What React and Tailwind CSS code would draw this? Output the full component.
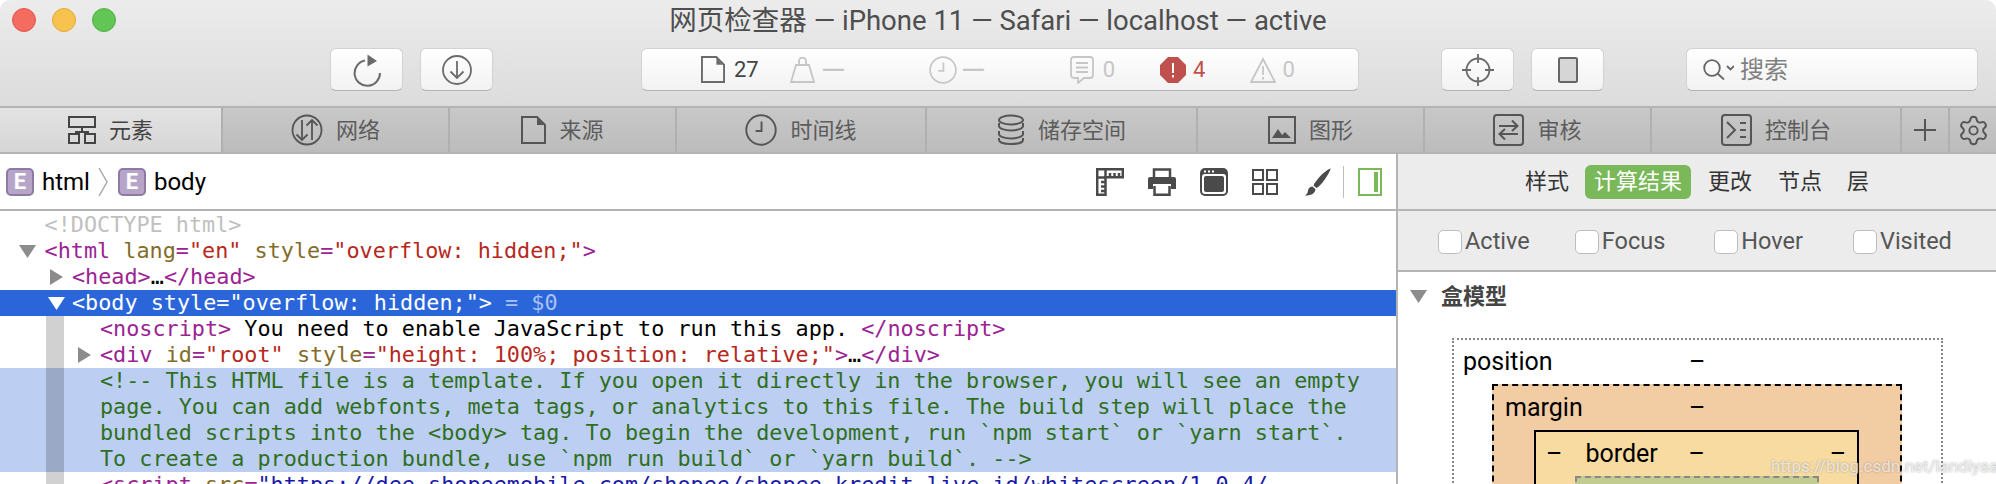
import React from 'react';
import { Settings } from 'lucide-react';

const Tri = ({ dir = 'down', color = '#8c8c8c', className = '' }) => (
  <svg width="17" height="16" viewBox="0 0 17 16" className={'shrink-0 ' + className}>
    {dir === 'down'
      ? <polygon points="0,2 17,2 8.5,15" fill={color} />
      : <polygon points="2,0 15,8 2,16" fill={color} />}
  </svg>
);

// syntax colours
const T = ({ children }) => <span className="text-[#9b2393]">{children}</span>;
const A = ({ children }) => <span className="text-[#836c28]">{children}</span>;
const V = ({ children }) => <span className="text-[#b7281c]">{children}</span>;
const Dots = () => <span className="text-black">…</span>;

const Row = ({ className = '', tri, children }) => (
  <div className={'h-[26px] leading-[26px] flex items-center whitespace-pre ' + className}>
    {tri}
    <span>{children}</span>
  </div>
);

const ToolButton = ({ className = '', children }) => (
  <div className={'h-[43px] bg-gradient-to-b from-white to-[#f2f2f2] rounded-[6px] border border-[#d2d2d2] border-b-[#b4b4b4] flex items-center justify-center ' + className}>
    {children}
  </div>
);

const Dash = () => (
  <span className="ml-[6px] w-[23px] text-center text-[32px] leading-none text-[#c6c6c6]">—</span>
);

const ElementsIcon = () => (
  <svg width="28" height="28" viewBox="0 0 28 28" fill="none" stroke="#444" strokeWidth="2">
    <rect x="1" y="1" width="26" height="10" />
    <path d="M14 11v5M7 16h14" />
    <rect x="1" y="18" width="10" height="9" />
    <rect x="17" y="18" width="10" height="9" />
  </svg>
);
const NetworkIcon = () => (
  <svg width="32" height="32" viewBox="0 0 32 32" fill="none" stroke="#555" strokeWidth="1.8">
    <circle cx="16" cy="16" r="14.5" />
    <path d="M11 6v20M5.500 20.500l5.500 5.500 5.500-5.500M21 26V6M15.500 11.500l5.500-5.500 5.500 5.500" />
  </svg>
);
const DocIcon = ({ color = '#555', w = 25, h = 28 }) => (
  <svg width={w} height={h} viewBox="0 0 25 28" fill="none" stroke={color} strokeWidth="2">
    <path d="M1 1h15l8 8v18H1z" />
    <path d="M16 2v7h7z" fill={color} stroke="none" />
  </svg>
);
const ClockIcon = ({ color = '#555', size = 30 }) => (
  <svg width={size} height={size} viewBox="0 0 30 30" fill="none" stroke={color} strokeWidth="1.8">
    <circle cx="15" cy="15" r="13.800" />
    <path d="M15.500 7v9H10" />
  </svg>
);
const StorageIcon = () => (
  <svg width="28" height="32" viewBox="0 0 28 32" fill="none" stroke="#555" strokeWidth="2">
    <ellipse cx="14" cy="6" rx="12" ry="4.500" />
    <path d="M2 9v3c0 2.500 5.500 4.500 12 4.500s12-2 12-4.500V9" />
    <path d="M2 17v3c0 2.500 5.500 4.500 12 4.500s12-2 12-4.500v-3" />
    <path d="M2 24v2c0 2.500 5.500 4 12 4s12-1.500 12-4v-2" />
  </svg>
);
const ImageIcon = () => (
  <svg width="28" height="28" viewBox="0 0 28 28" fill="none">
    <rect x="1" y="1" width="26" height="26" stroke="#555" strokeWidth="2" />
    <path d="M4 22l6-9 4 6 3-3 6 6z" fill="#555" />
  </svg>
);
const AuditIcon = () => (
  <svg width="31" height="32" viewBox="0 0 31 32" fill="none" stroke="#555" strokeWidth="2">
    <rect x="1" y="1" width="29" height="30" rx="3" />
    <path d="M6 12h18M19 6.500l5.500 5.500-5.500 5" />
    <path d="M25 20H7M12 15l-5.500 5 5.500 5.500" />
  </svg>
);
const ConsoleIcon = () => (
  <svg width="31" height="32" viewBox="0 0 31 32" fill="none" stroke="#555" strokeWidth="2">
    <rect x="1" y="1" width="29" height="30" rx="3" />
    <path d="M6 8l8 8-8 8M19 9h6M19 16h6M19 23h6" />
  </svg>
);
const RulerIcon = () => (
  <svg width="28" height="28" viewBox="0 0 28 28" fill="none" stroke="#4a4a4a" strokeWidth="2.500">
    <path d="M1.200 1.200h25.600v8H9.500v17.600H1.200z" />
    <path d="M9.500 1.500v8M14 5v4M18.500 5v4M23 5v4M1.500 9.500h8M5 14h4.500M5 18.500h4.500M5 23h4.500" />
  </svg>
);
const PrinterIcon = () => (
  <svg width="28" height="28" viewBox="0 0 28 28" fill="none">
    <path d="M6 9V1.500h16V9" stroke="#4a4a4a" strokeWidth="2.500" />
    <path d="M2 9h24a2 2 0 0 1 2 2v10h-5v-5H5v5H0V11a2 2 0 0 1 2-2z" fill="#4a4a4a" />
    <path d="M6.500 18v8.700h15V18" stroke="#4a4a4a" strokeWidth="2.500" />
  </svg>
);
const WindowIcon = () => (
  <svg width="28" height="28" viewBox="0 0 28 28">
    <rect x="0" y="0" width="28" height="28" rx="5" fill="#4a4a4a" />
    <rect x="2" y="6" width="24" height="20" rx="3" fill="#fff" />
    <rect x="4" y="8" width="20" height="16" rx="2" fill="#4a4a4a" />
    <rect x="4" y="2.500" width="2" height="2" fill="#fff" />
    <rect x="8" y="2.500" width="2" height="2" fill="#fff" />
    <rect x="12" y="2.500" width="2" height="2" fill="#fff" />
  </svg>
);
const GridIcon = () => (
  <svg width="26" height="26" viewBox="0 0 26 26" fill="none" stroke="#4a4a4a" strokeWidth="2">
    <rect x="1" y="1" width="10" height="10" />
    <rect x="15" y="1" width="10" height="10" />
    <rect x="1" y="15" width="10" height="10" />
    <rect x="15" y="15" width="10" height="10" />
  </svg>
);
const BrushIcon = () => (
  <svg width="26" height="28" viewBox="0 0 26 28" fill="#4a4a4a">
    <path d="M25.500 0.500C26 1 22 9 17.500 14.500c-2 2.500-4 4.500-6 5.500L8.500 17.500c1-2.500 3-5 5.500-8C18.500 4.500 25 0 25.500 0.500z" />
    <path d="M7.500 18.500l3 2.700c-.5 3.500-3 6.300-10.500 6.300 2.500-1.500 2.500-3 3-5 .5-2.500 2.500-4 4.500-4z" />
  </svg>
);
const PanelIcon = () => (
  <svg width="24" height="28" viewBox="0 0 24 28" fill="none">
    <rect x="1" y="1" width="22" height="26" stroke="#7ab85a" strokeWidth="2" />
    <rect x="16" y="4" width="4" height="20" fill="#7ab85a" />
  </svg>
);
const ElementBadge = () => (
  <span className="w-[28px] h-[28px] rounded-[5px] bg-[#b7a5c9] border-2 border-[#8f7aa6] flex items-center justify-center text-white text-[22px] leading-none font-bold">E</span>
);

const Tab = ({ className = '', icon, label, active }) => (
  <div className={'h-full shrink-0 flex items-center justify-center gap-[13px] border-r-2 border-[#b0b0b0] text-[22px] ' + (active ? 'text-[#444] bg-gradient-to-b from-[#e3e3e3] to-[#d6d6d6] ' : 'text-[#5c5c5c] ') + className}>
    {icon}
    {label && <span>{label}</span>}
  </div>
);

const Pseudo = ({ label, className = '' }) => (
  <div className={'flex items-center gap-[3px] ' + className}>
    <span className="w-[24px] h-[24px] rounded-[5px] bg-white border border-[#bdbdbd]" />
    <span>{label}</span>
  </div>
);

export default function App() {
  return (
    <div className="relative w-[1996px] h-[484px] overflow-hidden flex flex-col rounded-t-[10px] bg-white font-[Roboto,'Noto_Sans_CJK_SC',sans-serif]">
      {/* title + toolbar */}
      <div className="h-[106px] shrink-0 bg-gradient-to-b from-[#ececec] to-[#dcdcdc] relative">
        <div className="h-[48px] flex items-center justify-center pb-[6px] text-[27.500px] text-[#4e4e4e]">
          网页检查器 — iPhone 11 — Safari — localhost — active
        </div>
        <div className="absolute left-[12px] top-[8px] flex gap-[16px]">
          <span className="w-[24px] h-[24px] rounded-full bg-[#f46b60] border border-[#e0574c]" />
          <span className="w-[24px] h-[24px] rounded-full bg-[#f8c24e] border border-[#e2a93a]" />
          <span className="w-[24px] h-[24px] rounded-full bg-[#62c654] border border-[#50b044]" />
        </div>
        <div className="flex pl-[330px]">
          <ToolButton className="w-[73px]">
            <svg width="32" height="34" viewBox="0 0 32 34" fill="none">
              <path d="M14 7.600A12.700 12.700 0 1 0 29 20" stroke="#6b6b6b" strokeWidth="2" />
              <path d="M16.500 1.500L26 8l-9.500 5.500z" fill="#6b6b6b" />
            </svg>
          </ToolButton>
          <ToolButton className="w-[73px] ml-[17px]">
            <svg width="32" height="32" viewBox="0 0 32 32" fill="none" stroke="#6b6b6b" strokeWidth="1.800">
              <circle cx="16" cy="16" r="14" />
              <path d="M16 7v17M9.500 17.500l6.500 6.500 6.500-6.500" />
            </svg>
          </ToolButton>
          <ToolButton className="w-[718px] ml-[148px] justify-start text-[22px] pl-[59px]">
            <DocIcon color="#6b6b6b" w={24} h={27} />
            <span className="ml-[9px] text-[#444]">27</span>
            <svg className="ml-[31px]" width="25" height="26" viewBox="0 0 25 26" fill="none" stroke="#c6c6c6" strokeWidth="1.800">
              <path d="M6 8h13l5 17H1z" />
              <path d="M9 8V4a3 3 0 0 1 7 0v4" />
            </svg>
            <Dash />
            <span className="ml-[85px]"><ClockIcon color="#c6c6c6" size={28} /></span>
            <span className="ml-[4px] w-[23px] text-center text-[32px] leading-none text-[#c6c6c6]">—</span>
            <svg className="ml-[86px]" width="24" height="28" viewBox="0 0 24 28" fill="none" stroke="#c6c6c6" strokeWidth="1.800">
              <path d="M4 1h16a3 3 0 0 1 3 3v15a3 3 0 0 1-3 3h-6l-6 5v-5H4a3 3 0 0 1-3-3V4a3 3 0 0 1 3-3z" />
              <path d="M6 7h12M6 11.500h12M6 16h12" />
            </svg>
            <span className="ml-[9px] text-[#c6c6c6]">0</span>
            <svg className="ml-[45px]" width="26" height="26" viewBox="0 0 26 26">
              <polygon points="8,0 18,0 26,8 26,18 18,26 8,26 0,18 0,8" fill="#c0504d" />
              <path d="M12 6h2v10h-2zM12 18h2v2.500h-2z" fill="#fff" />
            </svg>
            <span className="ml-[7px] text-[#c0504d]">4</span>
            <svg className="ml-[45px]" width="26" height="26" viewBox="0 0 26 26" fill="none" stroke="#c6c6c6" strokeWidth="1.800">
              <path d="M13 2l12 23H1z" />
              <path d="M13 9v9M13 20v2.500" />
            </svg>
            <span className="ml-[6px] text-[#c6c6c6]">0</span>
          </ToolButton>
          <ToolButton className="w-[73px] ml-[82px]">
            <svg width="32" height="32" viewBox="0 0 32 32" fill="none" stroke="#6b6b6b" strokeWidth="1.800">
              <circle cx="16" cy="16" r="11.500" />
              <path d="M16 0v9M16 23v9M0 16h9M23 16h9" />
            </svg>
          </ToolButton>
          <ToolButton className="w-[73px] ml-[17px]">
            <svg width="20" height="26" viewBox="0 0 20 26">
              <rect x="1" y="1" width="18" height="24" rx="1.500" fill="#d6d6d6" stroke="#666" strokeWidth="2" />
            </svg>
          </ToolButton>
          <ToolButton className="w-[292px] ml-[82px] justify-start pl-[16px] text-[24px] text-[#808080]">
            <svg width="31" height="21" viewBox="0 0 31 21" fill="none" stroke="#666" strokeWidth="1.800">
              <circle cx="9" cy="9" r="7.800" />
              <path d="M14.500 14.500L21 20.500" />
              <path d="M24 7l3.500 3.500L31 7" />
            </svg>
            <span className="ml-[6px]">搜索</span>
          </ToolButton>
        </div>
      </div>

      {/* tab bar */}
      <div className="h-[48px] shrink-0 flex border-y-2 border-[#b4b4b4] bg-gradient-to-b from-[#c8c8c8] to-[#bcbcbc]">
        <Tab active className="w-[223px]" icon={<ElementsIcon />} label="元素" />
        <Tab className="w-[227px]" icon={<NetworkIcon />} label="网络" />
        <Tab className="w-[227px]" icon={<DocIcon />} label="来源" />
        <Tab className="w-[250px]" icon={<ClockIcon size={32} />} label="时间线" />
        <Tab className="w-[271px]" icon={<StorageIcon />} label="储存空间" />
        <Tab className="w-[227px]" icon={<ImageIcon />} label="图形" />
        <Tab className="w-[227px]" icon={<AuditIcon />} label="审核" />
        <Tab className="w-[250px]" icon={<ConsoleIcon />} label="控制台" />
        <Tab className="w-[48px]" icon={
          <svg width="24" height="24" viewBox="0 0 24 24" stroke="#555" strokeWidth="2"><path d="M12 1v22M1 12h22" /></svg>
        } />
        <div className="flex-1 flex items-center justify-center">
          <Settings size={33} strokeWidth={1.4} color="#555" />
        </div>
      </div>

      <div className="flex-1 flex min-h-0">
        {/* DOM pane */}
        <div className="w-[1396px] shrink-0 flex flex-col">
          <div className="h-[57px] shrink-0 border-b-2 border-[#b4b4b4] flex items-center text-[24px] text-black pl-[6px]">
            <ElementBadge />
            <span className="ml-[8px]">html</span>
            <svg className="ml-[8px]" width="10" height="28" viewBox="0 0 10 28" fill="none" stroke="#aaa" strokeWidth="1.500"><path d="M1 0l8 14L1 28" /></svg>
            <span className="ml-[10px]"><ElementBadge /></span>
            <span className="ml-[8px]">body</span>
            <div className="ml-auto flex items-center pr-[14px]">
              <RulerIcon />
              <span className="ml-[24px] flex"><PrinterIcon /></span>
              <span className="ml-[24px] flex"><WindowIcon /></span>
              <span className="ml-[24px] flex"><GridIcon /></span>
              <span className="ml-[27px] flex"><BrushIcon /></span>
              <span className="ml-[12px] w-px h-[32px] bg-[#bdbdbd]" />
              <span className="ml-[14px] flex"><PanelIcon /></span>
            </div>
          </div>
          <div className="relative flex-1 overflow-hidden pt-px text-[21.800px] font-['DejaVu_Sans_Mono',monospace] text-black">
            <Row className="pl-[44.600px] text-[#c0c0c0]">{'<!DOCTYPE html>'}</Row>
            <Row className="pl-[19px]" tri={<Tri className="mr-[8.600px]" />}>
              <T>{'<html'}</T>{' '}<A>lang</A><T>=</T><V>"en"</V>{' '}<A>style</A><T>=</T><V>"overflow: hidden;"</V><T>{'>'}</T>
            </Row>
            <Row className="pl-[48px]" tri={<Tri dir="right" className="mr-[7px]" />}>
              <T>{'<head>'}</T><Dots /><T>{'</head>'}</T>
            </Row>
            <Row className="pl-[48px] bg-[#2a66d9] text-white" tri={<Tri color="#fff" className="mr-[7px]" />}>
              {'<body style="overflow: hidden;">'}<span className="text-[#a9c1f0]"> = $0</span>
            </Row>
            <Row className="pl-[100px]">
              <T>{'<noscript>'}</T>{' You need to enable JavaScript to run this app. '}<T>{'</noscript>'}</T>
            </Row>
            <Row className="pl-[76px]" tri={<Tri dir="right" className="mr-[7px]" />}>
              <T>{'<div'}</T>{' '}<A>id</A><T>=</T><V>"root"</V>{' '}<A>style</A><T>=</T><V>"height: 100%; position: relative;"</V><T>{'>'}</T><Dots /><T>{'</div>'}</T>
            </Row>
            <div className="bg-[#bccff2] text-[#2f6f1d]">
              <Row className="pl-[100px]">{'<!-- This HTML file is a template. If you open it directly in the browser, you will see an empty'}</Row>
              <Row className="pl-[100px]">{'page. You can add webfonts, meta tags, or analytics to this file. The build step will place the'}</Row>
              <Row className="pl-[100px]">{'bundled scripts into the <body> tag. To begin the development, run `npm start` or `yarn start`.'}</Row>
              <Row className="pl-[100px]">{'To create a production bundle, use `npm run build` or `yarn build`. -->'}</Row>
            </div>
            <Row className="pl-[100px]">
              <T>{'<script'}</T>{' '}<A>src</A><T>=</T><span className="text-[#1a1aa6]">"https://dee.shopeemobile.com/shopee/shopee-kredit-live-id/whitescreen/1.0.4/</span>
            </Row>
            {/* indent guide over the rows */}
            <div className="absolute left-[46px] top-[105px] bottom-0 w-[18px] bg-black/[0.18]" />
          </div>
        </div>

        {/* details sidebar */}
        <div className="flex-1 border-l-2 border-[#b4b4b4] flex flex-col min-w-0 overflow-hidden">
          <div className="h-[57px] shrink-0 bg-[#ececec] border-b-2 border-[#b4b4b4] flex items-center text-[22px] text-[#333] pl-[127px]">
            <span>样式</span>
            <span className="ml-[16px] w-[106px] h-[34px] rounded-[6px] bg-[#7ab85a] text-white flex items-center justify-center">计算结果</span>
            <span className="ml-[17px]">更改</span>
            <span className="ml-[26px]">节点</span>
            <span className="ml-[25px]">层</span>
          </div>
          <div className="h-[61px] shrink-0 bg-[#ececec] border-b-2 border-[#b4b4b4] flex items-center pt-[3px] text-[23.500px] text-[#555] pl-[40px]">
            <Pseudo label="Active" />
            <Pseudo label="Focus" className="ml-[45px]" />
            <Pseudo label="Hover" className="ml-[49px]" />
            <Pseudo label="Visited" className="ml-[50px]" />
          </div>
          <div className="flex-1 bg-white">
            <div className="h-[48px] flex items-center pl-[12px] text-[#444] text-[22px] font-bold">
              <Tri />
              <span className="ml-[14px]">盒模型</span>
            </div>
            <div className="ml-[54px] mt-[18px] w-[491px] h-[300px] border-2 border-dotted border-[#888] text-[25px] text-black">
              <div className="h-[44px] flex items-center pl-[9px]">
                <span className="w-[226px]">position</span><span>–</span>
              </div>
              <div className="ml-[38px] w-[410px] h-[240px] border-2 border-dashed border-black bg-[#f2cca2]">
                <div className="h-[44px] flex items-center pl-[11px]">
                  <span className="w-[184px]">margin</span><span>–</span>
                </div>
                <div className="ml-[40px] w-[325px] h-[180px] border-2 border-black bg-[#f8dba0]">
                  <div className="h-[44px] flex items-center pl-[10px]">
                    <span>–</span>
                    <span className="ml-[23px] w-[103px]">border</span>
                    <span>–</span>
                    <span className="ml-[125px]">–</span>
                  </div>
                  <div className="ml-[39px] w-[244px] h-[120px] border-2 border-dashed border-[#888] bg-[#c3cc90]" />
                </div>
              </div>
            </div>
          </div>
        </div>
      </div>

      <div className="absolute left-[1771px] top-[452px] text-[17px] leading-[28px] text-white/70 [text-shadow:0_0_2px_rgba(120,120,120,0.7)] whitespace-nowrap">
        https://blog.csdn.net/landiyaaa
      </div>
    </div>
  );
}
